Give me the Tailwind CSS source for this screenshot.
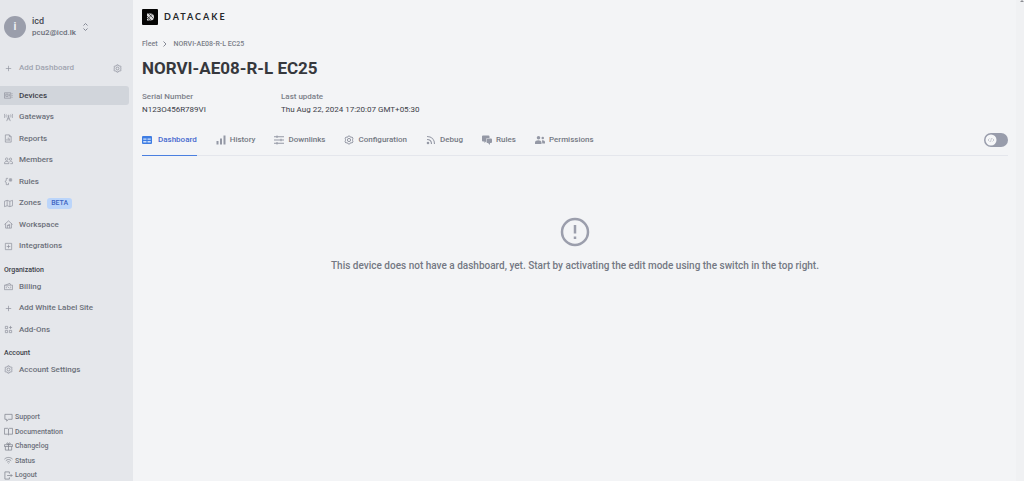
<!DOCTYPE html>
<html lang="en">
<head>
<meta charset="utf-8">
<meta name="viewport" content="width=device-width, initial-scale=1">
<title>NORVI-AE08-R-L EC25</title>
<script src="https://cdn.jsdelivr.net/npm/@tailwindcss/browser@4"></script>
</head>
<body class="flex h-screen overflow-hidden bg-[#f3f4f6] font-['Roboto',sans-serif] text-[8px] leading-[12px] text-[#3c4048]">

<svg class="hidden" aria-hidden="true">
  <symbol id="plus" viewBox="0 0 20 20"><path d="M10 4v12M4 10h12"/></symbol>
  <symbol id="cog" viewBox="0 0 20 20"><circle cx="10" cy="10" r="3.200"/><path d="M8.500 2h3l.8 1.800 1.800.8 2-.6 1.800 2.400-.8 2 .4 1.600-.4 1.600.8 2-1.800 2.400-2-.6-1.800.8-.8 1.800h-3l-.8-1.800-1.800-.8-2 .6-1.800-2.400.8-2L2.700 10l.4-1.600-.8-2L4.100 4l2 .6 1.800-.8z"/></symbol>
  <symbol id="device" viewBox="0 0 20 20"><path d="M1 4h14v12H1zM4 7h5v5H4zM12 7v5M18 5v2M18 9v2M18 13v2"/></symbol>
  <symbol id="tower" viewBox="0 0 20 20"><circle cx="10" cy="6.500" r="1.500"/><path d="M10 8L6 18M10 8l4 10M8 13h4M5.500 9.500c-1.300-2-1.300-4 0-6M14.500 9.500c1.300-2 1.300-4 0-6M2 11C0 8 0 5 2 2M18 11c2-3 2-6 0-9"/></symbol>
  <symbol id="report" viewBox="0 0 20 20"><path d="M3 2h9l4 4v12H3zM12 2v4h4M6.500 15v-4M9.500 15V8M12.500 15v-5"/></symbol>
  <symbol id="users" viewBox="0 0 20 20"><circle cx="6" cy="7" r="2.800"/><circle cx="14.500" cy="7" r="2.500"/><path d="M1 17v-2c0-4 10-4 10 0v2zM12.500 12c3-1 6.500 0 6.500 3v2h-5"/></symbol>
  <symbol id="branch" viewBox="0 0 20 20"><path d="M9 3H5v5l-3 2 3 2v5h5M12 4h5v5h-5zM14.500 4v5M10 13v4"/></symbol>
  <symbol id="map" viewBox="0 0 20 20"><path d="M1 5l6-2 6 2 6-2v12l-6 2-6-2-6 2zM7 3v12M13 5v12"/></symbol>
  <symbol id="home" viewBox="0 0 20 20"><path d="M1 10l9-8 9 8M3.500 8v10h13V8M7.500 18v-6l5-2v8M7.500 12h5"/></symbol>
  <symbol id="integrations" viewBox="0 0 20 20"><path d="M3 3h14v14H3zM10 6v8M6 10h8"/></symbol>
  <symbol id="billing" viewBox="0 0 20 20"><path d="M1 7h18v10H1zM3 7l10-4 2 4M5 10v4M15 10v4M8 10l4 4"/></symbol>
  <symbol id="addons" viewBox="0 0 20 20"><path d="M3 3h5v5H3zM3 12h5v5H3zM12 12h5v5h-5zM14.500 2v7M11 5.500h7"/></symbol>
  <symbol id="chat" viewBox="0 0 20 20"><path d="M2 3h16v11h-8l-4 4v-4H2z"/></symbol>
  <symbol id="book" viewBox="0 0 20 20"><path d="M1 3h7l2 1.500L12 3h7v13h-7l-2 1.500L8 16H1zM10 4.500v13"/></symbol>
  <symbol id="gift" viewBox="0 0 20 20"><path d="M1 6h18v4H1zM3 10v8h14v-8M10 6v12M10 6C6 6 5 2 7.500 2S10 6 10 6s0-4 2.500-4S14 6 10 6"/></symbol>
  <symbol id="wifi" viewBox="0 0 20 20"><path d="M1 7c5-5 13-5 18 0M4 10.500c3.500-3.500 8.500-3.500 12 0M7 14c2-2 4-2 6 0M10 16.500v1"/></symbol>
  <symbol id="logout" viewBox="0 0 20 20"><path d="M12 6V2H2v16h10v-4M7 10h11M15 7l3 3-3 3"/></symbol>
</svg>

<aside class="flex w-[133px] shrink-0 flex-col bg-[#e5e7eb] pt-[15px] font-medium text-[#6c707a]">
  <button type="button" class="flex items-center pl-1 text-left">
    <span class="flex size-[22px] items-center justify-center rounded-full bg-[#9a9eab] text-[11px] font-bold text-[#f0f1f4]">i</span>
    <span class="ml-1.5 flex flex-col">
      <span class="text-[9px] text-[#454952]">icd</span>
      <span>pcu2@icd.lk</span>
    </span>
    <svg class="ml-1.5 h-[10px] w-[7px] fill-none stroke-[#858995]" viewBox="0 0 7 10"><path d="M1.500 3.500l2-2 2 2M1.500 6.500l2 2 2-2"/></svg>
  </button>

  <div class="mt-5 flex h-[18px] items-center justify-between pr-[11px] pl-1 text-[#a0a4af]">
    <button type="button" class="flex items-center gap-1.5"><svg class="size-[9px] fill-none stroke-[#8f939e] stroke-[1.5]"><use href="#plus"/></svg>Add Dashboard</button>
    <button type="button" aria-label="Dashboard settings"><svg class="size-[9px] fill-none stroke-[#8f939e] stroke-[1.8]"><use href="#cog"/></svg></button>
  </div>

  <nav class="mt-[9px] flex h-[170px] flex-col justify-between pr-1 [&_svg]:size-[9px] [&_svg]:fill-none [&_svg]:stroke-[#8f939e] [&_svg]:stroke-[1.6]">
    <a href="#" class="flex h-[19px] items-center gap-1.5 rounded-r-[3px] bg-[#d1d5db] pl-1 text-[#3c4048]"><svg><use href="#device"/></svg>Devices</a>
    <a href="#" class="flex h-[19px] items-center gap-1.5 pl-1"><svg><use href="#tower"/></svg>Gateways</a>
    <a href="#" class="flex h-[19px] items-center gap-1.5 pl-1"><svg><use href="#report"/></svg>Reports</a>
    <a href="#" class="flex h-[19px] items-center gap-1.5 pl-1"><svg><use href="#users"/></svg>Members</a>
    <a href="#" class="flex h-[19px] items-center gap-1.5 pl-1"><svg><use href="#branch"/></svg>Rules</a>
    <a href="#" class="flex h-[19px] items-center gap-1.5 pl-1"><svg><use href="#map"/></svg>Zones<span class="rounded-[3px] bg-[#bbd5fa] px-1 text-[7px] leading-[11px] text-[#3f66c2]">BETA</span></a>
    <a href="#" class="flex h-[19px] items-center gap-1.5 pl-1"><svg><use href="#home"/></svg>Workspace</a>
    <a href="#" class="flex h-[19px] items-center gap-1.5 pl-1"><svg><use href="#integrations"/></svg>Integrations</a>
  </nav>

  <h2 class="mt-2 pl-1 text-[7px] text-[#3c4048]">Organization</h2>
  <nav class="mt-[1px] flex h-[62px] flex-col justify-between [&_svg]:size-[9px] [&_svg]:fill-none [&_svg]:stroke-[#8f939e] [&_svg]:stroke-[1.6]">
    <a href="#" class="flex h-[19px] items-center gap-1.5 pl-1"><svg><use href="#billing"/></svg>Billing</a>
    <a href="#" class="flex h-[19px] items-center gap-1.5 pl-1"><svg><use href="#plus"/></svg>Add White Label Site</a>
    <a href="#" class="flex h-[19px] items-center gap-1.5 pl-1"><svg><use href="#addons"/></svg>Add-Ons</a>
  </nav>

  <h2 class="mt-2 pl-1 text-[7px] text-[#3c4048]">Account</h2>
  <a href="#" class="mt-[1px] flex h-[19px] items-center gap-1.5 pl-1"><svg class="size-[9px] fill-none stroke-[#8f939e] stroke-[1.8]"><use href="#cog"/></svg>Account Settings</a>

  <nav class="mt-auto flex h-[70px] flex-col justify-between pl-1 text-[7px] [&_svg]:size-[9px] [&_svg]:fill-none [&_svg]:stroke-[#7d818c] [&_svg]:stroke-[1.6]">
    <a href="#" class="flex items-center gap-0.5"><svg><use href="#chat"/></svg>Support</a>
    <a href="#" class="flex items-center gap-0.5"><svg><use href="#book"/></svg>Documentation</a>
    <a href="#" class="flex items-center gap-0.5"><svg><use href="#gift"/></svg>Changelog</a>
    <a href="#" class="flex items-center gap-0.5"><svg><use href="#wifi"/></svg>Status</a>
    <a href="#" class="flex items-center gap-0.5"><svg><use href="#logout"/></svg>Logout</a>
  </nav>
</aside>

<main class="min-w-0 flex-1 pt-[9px] pr-2 pl-[9px]">
  <a href="#" class="flex items-center gap-1.5 font-['Lato',sans-serif] text-[9px] leading-4 font-bold tracking-[2px] text-[#25272b]">
    <svg class="size-4" viewBox="0 0 16 16"><rect width="16" height="16" rx="1" fill="#050505"/><path d="M5 4.500h3.500a3.500 3.500 0 0 1 0 7H5z" fill="#d8d8da"/><path d="M4.500 6.500l5 5M6.500 4.500l5 5M5 9l3.500 3M10.500 5L5.500 10" stroke="#111" stroke-width=".6"/></svg>
    DATACAKE
  </a>

  <nav aria-label="Breadcrumb" class="mt-[13px] flex items-center gap-1.5 text-[7px] font-medium text-[#7b7f89]">
    <a href="#">Fleet</a>
    <svg class="h-2 w-1 fill-none stroke-[#858995]" viewBox="0 0 4 8"><path d="M.5 1.500L3 4 .5 6.500"/></svg>
    <a href="#">NORVI-AE08-R-L EC25</a>
  </nav>

  <h1 class="mt-2 text-[17px] leading-5 font-bold text-[#36383d]">NORVI-AE08-R-L EC25</h1>

  <dl class="mt-3 flex leading-[13px]">
    <div class="w-[139px]"><dt class="font-medium text-[#7b7f89]">Serial Number</dt><dd>N123O456R789VI</dd></div>
    <div><dt class="font-medium text-[#7b7f89]">Last update</dt><dd>Thu Aug 22, 2024 17:20:07 GMT+05:30</dd></div>
  </dl>

  <div class="mt-[9px] flex h-[31px] items-stretch border-b border-[#e4e6ec] font-medium text-[#747883]">
    <nav class="-mb-px flex gap-[19px] [&_svg]:h-[10px] [&_svg]:w-[10px]">
      <a href="#" aria-current="page" class="flex items-center gap-1.5 border-b border-[#4a7fe0] text-[#4669cf]"><svg viewBox="0 0 20 20"><rect x="0" y="2" width="20" height="16" rx="2" fill="#3f7de3"/><path d="M2.500 7H9v2.500H2.500zM11 7h6.500v2.500H11zM2.500 12H9v3H2.500zM11 12h6.500v3H11z" fill="#cfe1fb"/></svg>Dashboard</a>
      <a href="#" class="flex items-center gap-1 border-b border-transparent"><svg viewBox="0 0 20 20" fill="#9498a5"><path d="M1 12h4v7H1zM8 7h4v12H8zM15 1h4v18h-4z"/></svg>History</a>
      <a href="#" class="flex items-center gap-1 border-b border-transparent"><svg viewBox="0 0 20 20" fill="none" stroke="#9498a5" stroke-width="2"><path d="M0 3.500h20M0 10h20M0 16.500h20M6 1v5M14 7.500v5M6 14v5"/></svg>Downlinks</a>
      <a href="#" class="flex items-center gap-1 border-b border-transparent"><svg viewBox="0 0 20 20" fill="none" stroke="#9498a5" stroke-width="2"><use href="#cog"/></svg>Configuration</a>
      <a href="#" class="flex items-center gap-1 border-b border-transparent"><svg viewBox="0 0 20 20" fill="none" stroke="#9498a5" stroke-width="2.200"><path d="M2 3c9 0 15 6 15 15M2 9c6 0 9 3 9 9"/><circle cx="4" cy="16" r="1.500" fill="#9498a5"/></svg>Debug</a>
      <a href="#" class="flex items-center gap-1 border-b border-transparent"><svg viewBox="0 0 20 20" fill="#9498a5"><path d="M2 1h11a2 2 0 0 1 2 2v3h-4a3 3 0 0 0-3 3v4l-3 3v-3H2a2 2 0 0 1-2-2V3a2 2 0 0 1 2-2z"/><path d="M11 7h7a2 2 0 0 1 2 2v5a2 2 0 0 1-2 2h-2v4l-4-4h-1a2 2 0 0 1-2-2V9a2 2 0 0 1 2-2z"/></svg>Rules</a>
      <a href="#" class="flex items-center gap-1 border-b border-transparent"><svg viewBox="0 0 20 20" fill="#9498a5"><circle cx="7" cy="5.500" r="3.500"/><circle cx="15.500" cy="6" r="2.500"/><path d="M0 18v-3c0-6 13-6 13 0v3zM14.500 17H20v-2.500c0-3-3.500-4.500-6-3.500z"/></svg>Permissions</a>
    </nav>
    <label class="relative ml-auto flex items-center">
      <input type="checkbox" role="switch" aria-label="Edit mode" class="h-[14px] w-6 appearance-none rounded-full bg-[#989cab]">
      <svg class="pointer-events-none absolute left-px size-3" viewBox="0 0 12 12" fill="none" stroke="#b4b7c2" stroke-width=".7"><circle cx="6" cy="6" r="5.500" fill="#f6f7f9" stroke="none"/><path d="M4.500 4.500L3 6l1.500 1.500M7.500 4.500L9 6 7.500 7.500M6.500 4l-1 4"/></svg>
    </label>
  </div>

  <section class="mt-[61px] flex flex-col items-center px-4 text-center">
    <svg class="size-[30px]" viewBox="0 0 30 30" fill="none" stroke="#9b9eac" stroke-width="2.500"><circle cx="15" cy="15" r="13"/><path d="M15 8v8.500M15 19.500V22"/></svg>
    <p class="mt-3 text-[10px] leading-[14px] font-medium text-[#747883]">This device does not have a dashboard, yet. Start by activating the edit mode using the switch in the top right.</p>
  </section>
</main>

<div class="w-2 shrink-0 bg-[#f0f1f3]" aria-hidden="true"><svg class="ml-1 h-1 w-1" viewBox="0 0 4 4"><path d="M0 2l2-2 2 2z" fill="#8b8d92"/></svg></div>
</body>
</html>
